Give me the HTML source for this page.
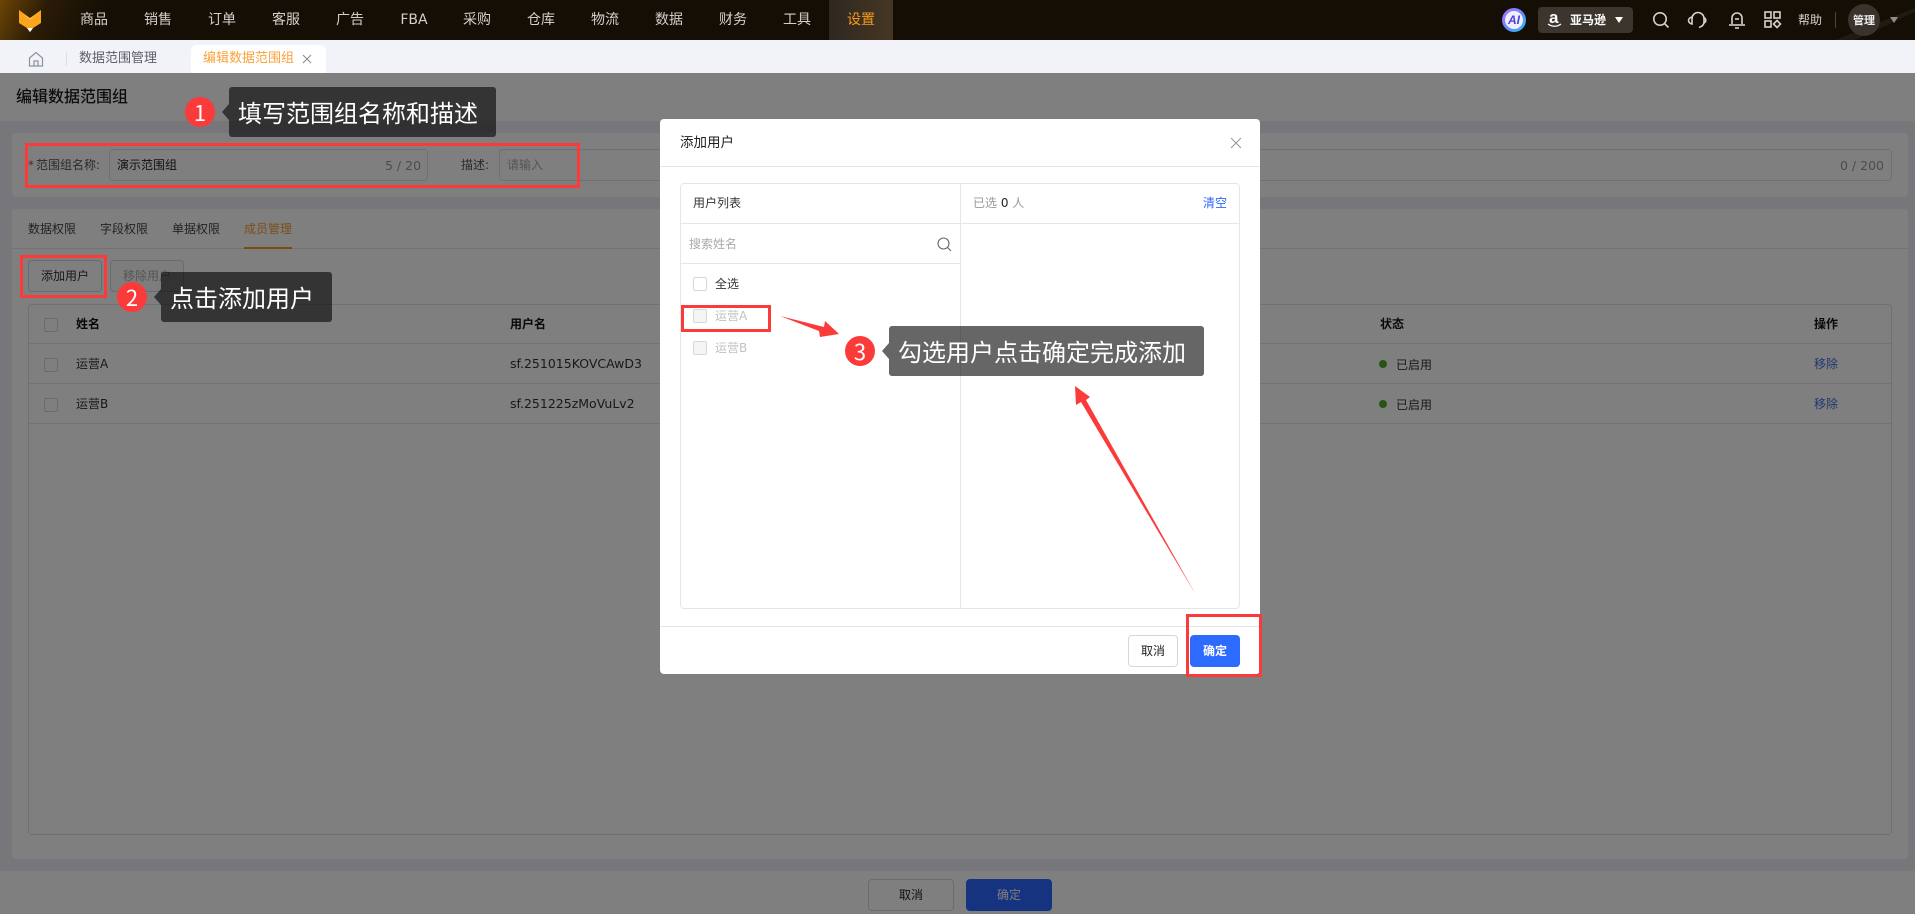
<!DOCTYPE html>
<html lang="zh"><head><meta charset="utf-8"><title>编辑数据范围组</title>
<style>
*{box-sizing:border-box;margin:0;padding:0}
html,body{width:1915px;height:914px;overflow:hidden;background:#eeeef6}
body{position:relative;font:12px/1 "DejaVu Sans","Noto Sans CJK SC",sans-serif;color:#1f1f1f}
.a{position:absolute;white-space:nowrap}
.t{line-height:16px;height:16px}
.header{left:0;top:0;width:1915px;height:40px;background:linear-gradient(115deg,#6b4506 0,#2a1b06 45px,#140e05 100px,#140e05 100%);overflow:hidden}
.nav{top:0;height:40px;line-height:40px;width:64px;text-align:center;font-size:14px;color:#d2d0cc}
.box{background:#fff;border:1px solid #dfe1e6;border-radius:4px}
.cb{width:14px;height:14px;border:1px solid #d4d7de;border-radius:2px;background:#fff}
.btn{text-align:center;border-radius:4px;height:32px;line-height:30px;border:1px solid #d4d7de;background:#fff}
.rl{height:1px;background:#e3e5ea}
.red{border:3px solid #fb3a3a;background:transparent}
.tip{background:rgba(5,5,5,.61);border-radius:3px;height:50px;color:#fff;font:24px/50px "Noto Sans CJK SC",sans-serif;padding-left:9px}
.tip:before{content:"";position:absolute;left:-7px;top:17px;border:8px solid transparent;border-left:0;border-right:7px solid rgba(5,5,5,.61)}
.n{width:30px;height:30px;border-radius:50%;background:#fb3a3a;color:#fff;text-align:center;font:22px/30px "Noto Sans CJK SC",sans-serif}
</style></head><body>

<!-- page below overlay -->
<div class="a" style="left:0;top:73px;width:1915px;height:48px;background:#fff"></div>
<div class="a t" style="left:16px;top:89px;font-size:16px;font-weight:500;color:#1b1b1b">编辑数据范围组</div>

<div class="a" style="left:12px;top:133px;width:1896px;height:64px;background:#fff;border-radius:4px"></div>
<div class="a t" style="left:28px;top:157px;color:#e33">*</div>
<div class="a t" style="left:36px;top:157px;color:#555">范围组名称:</div>
<div class="a box" style="left:109px;top:149px;width:319px;height:32px"></div>
<div class="a t" style="left:117px;top:157px;color:#222">演示范围组</div>
<div class="a t" style="left:385px;top:158px;color:#999;font-size:12.5px">5 / 20</div>
<div class="a t" style="left:461px;top:157px;color:#555">描述:</div>
<div class="a box" style="left:499px;top:149px;width:1393px;height:32px"></div>
<div class="a t" style="left:507px;top:157px;color:#aaa">请输入</div>
<div class="a t" style="left:1840px;top:158px;color:#999;font-size:12.5px">0 / 200</div>

<div class="a" style="left:12px;top:209px;width:1896px;height:650px;background:#fff;border-radius:4px"></div>
<div class="a t" style="left:28px;top:221px;color:#444">数据权限</div>
<div class="a t" style="left:100px;top:221px;color:#444">字段权限</div>
<div class="a t" style="left:172px;top:221px;color:#444">单据权限</div>
<div class="a t" style="left:244px;top:221px;color:#f39c32">成员管理</div>
<div class="a" style="left:12px;top:248px;width:1896px;height:1px;background:#e3e5ea"></div>
<div class="a" style="left:244px;top:247px;width:48px;height:2px;background:#f39c12"></div>
<div class="a btn" style="left:28px;top:260px;width:74px;color:#333">添加用户</div>
<div class="a btn" style="left:110px;top:260px;width:74px;color:#aaa;background:#fafafa">移除用户</div>

<div class="a box" style="left:28px;top:304px;width:1864px;height:531px"></div>
<div class="a rl" style="left:29px;top:343px;width:1862px"></div>
<div class="a rl" style="left:29px;top:383px;width:1862px"></div>
<div class="a rl" style="left:29px;top:423px;width:1862px"></div>
<div class="a cb" style="left:44px;top:318px"></div>
<div class="a cb" style="left:44px;top:358px"></div>
<div class="a cb" style="left:44px;top:398px"></div>
<div class="a t" style="left:76px;top:316px;font-weight:700;color:#111">姓名</div>
<div class="a t" style="left:510px;top:316px;font-weight:700;color:#111">用户名</div>
<div class="a t" style="left:1380px;top:316px;font-weight:700;color:#111">状态</div>
<div class="a t" style="left:1814px;top:316px;font-weight:700;color:#111">操作</div>
<div class="a t" style="left:76px;top:356px;color:#333">运营A</div>
<div class="a t" style="left:510px;top:356px;color:#333;font-size:12.5px">sf.251015KOVCAwD3</div>
<div class="a t" style="left:76px;top:396px;color:#333">运营B</div>
<div class="a t" style="left:510px;top:396px;color:#333;font-size:12.5px">sf.251225zMoVuLv2</div>
<div class="a" style="left:1379px;top:360px;width:8px;height:8px;border-radius:50%;background:#52a82e"></div>
<div class="a t" style="left:1396px;top:357px;color:#333">已启用</div>
<div class="a" style="left:1379px;top:400px;width:8px;height:8px;border-radius:50%;background:#52a82e"></div>
<div class="a t" style="left:1396px;top:397px;color:#333">已启用</div>
<div class="a t" style="left:1814px;top:356px;color:#3f6fe0">移除</div>
<div class="a t" style="left:1814px;top:396px;color:#3f6fe0">移除</div>

<div class="a" style="left:0;top:871px;width:1915px;height:43px;background:#fff"></div>
<div class="a btn" style="left:868px;top:879px;width:86px;color:#222">取消</div>
<div class="a btn" style="left:966px;top:879px;width:86px;background:#2d66ff;border-color:#2d66ff;color:#fff">确定</div>

<!-- overlay -->
<div class="a" style="left:0;top:73px;width:1915px;height:841px;background:rgba(0,0,0,.5)"></div>

<!-- top header -->
<div class="a header">
  <svg class="a" style="right:0;top:0" width="120" height="40" viewBox="0 0 120 40"><path d="M40 40L120 8V12L60 40Z" fill="#2a2620" opacity=".5"/></svg>
  <svg class="a" style="left:0;top:0" width="50" height="40" viewBox="0 0 50 40">
    <path d="M19 10L30 18 41 10V23L33 28 30 32 27 28 19 23Z" fill="#fba51c"/>
    <path d="M27 28H33L30 32Z" fill="#fff"/>
    <path d="M24 15L30 20 36 15 30 18Z" fill="#fdc04a"/>
  </svg>
  <div class="a nav" style="left:62px">商品</div>
  <div class="a nav" style="left:126px">销售</div>
  <div class="a nav" style="left:190px">订单</div>
  <div class="a nav" style="left:254px">客服</div>
  <div class="a nav" style="left:318px">广告</div>
  <div class="a nav" style="left:382px">FBA</div>
  <div class="a nav" style="left:445px">采购</div>
  <div class="a nav" style="left:509px">仓库</div>
  <div class="a nav" style="left:573px">物流</div>
  <div class="a nav" style="left:637px">数据</div>
  <div class="a nav" style="left:701px">财务</div>
  <div class="a nav" style="left:765px">工具</div>
  <div class="a nav" style="left:829px;background:linear-gradient(90deg,#2e2820,#463624);color:#f79a1e">设置</div>

  <div class="a" style="left:1502px;top:8px;width:24px;height:24px;border-radius:50%;background:linear-gradient(135deg,#b36bff,#5d8cff 55%,#29c7f7);"></div>
  <div class="a" style="left:1505px;top:11px;width:18px;height:18px;border-radius:50%;background:#f2eefc;color:#4b3fd8;font:italic 700 12px/18px 'Liberation Sans',sans-serif;text-align:center">AI</div>

  <div class="a" style="left:1538px;top:7px;width:95px;height:26px;background:#3b352d;border-radius:4px"></div>
  <div class="a" style="left:1549px;top:8px;color:#fff;font:700 17px/20px 'Liberation Sans',sans-serif">a</div>
  <svg class="a" style="left:1547px;top:23px" width="16" height="6" viewBox="0 0 16 6"><path d="M1 1C5 4 10 4 14 1" fill="none" stroke="#fff" stroke-width="1.3"/></svg>
  <div class="a" style="left:1570px;top:12px;line-height:16px;color:#fff;font-weight:700">亚马逊</div>
  <svg class="a" style="left:1615px;top:17px" width="8" height="7" viewBox="0 0 8 7"><path d="M0 0H8L4 6Z" fill="#fff"/></svg>

  <svg class="a" style="left:1652px;top:11px" width="18" height="18" viewBox="0 0 18 18" fill="none" stroke="#d5d3cf" stroke-width="1.6"><circle cx="8" cy="8" r="6.2"/><path d="M12.5 12.5L16.5 16.5"/></svg>
  <svg class="a" style="left:1687px;top:11px" width="20" height="18" viewBox="0 0 20 18" fill="none" stroke="#d5d3cf" stroke-width="1.6"><path d="M5 7.500A6 6 0 0 1 17 7.500V11C17 14 15 15.500 12 16.500"/><path d="M5 6C3 6.500 1.500 8 1.500 9.500S3 12.500 5 13Z"/><path d="M17 6.500C18.300 7.300 18.800 8.300 18.800 9.300S18.300 11.300 17 12"/></svg>
  <svg class="a" style="left:1728px;top:11px" width="18" height="18" viewBox="0 0 18 18" fill="none" stroke="#d5d3cf" stroke-width="1.6"><path d="M4 13V7A5 5 0 0 1 14 7V13"/><path d="M1 14H17"/><path d="M7 17H11"/><path d="M7 8H11"/></svg>
  <svg class="a" style="left:1764px;top:11px" width="18" height="18" viewBox="0 0 18 18" fill="none" stroke="#d5d3cf" stroke-width="1.6"><rect x="1" y="1" width="6" height="6"/><rect x="10" y="1" width="6" height="6"/><rect x="1" y="10" width="6" height="6"/><path d="M13 9.500L16.500 13 13 16.500 9.500 13Z"/></svg>
  <div class="a" style="left:1798px;top:12px;line-height:16px;color:#d5d3cf">帮助</div>
  <div class="a" style="left:1835px;top:12px;width:1px;height:16px;background:#4a4640"></div>
  <div class="a" style="left:1848px;top:4px;width:32px;height:32px;border-radius:50%;background:#38332c;color:#eee;font-size:11px;line-height:33px;text-align:center;font-weight:700">管理</div>
  <svg class="a" style="left:1890px;top:17px" width="8" height="7" viewBox="0 0 8 7"><path d="M0 0H8L4 6Z" fill="#8f8d88"/></svg>
</div>

<!-- tab bar -->
<div class="a" style="left:0;top:40px;width:1915px;height:33px;background:#f1f3f8"></div>
<svg class="a" style="left:28px;top:51px" width="16" height="16" viewBox="0 0 16 16" fill="none" stroke="#8c929c" stroke-width="1.2"><path d="M1.500 7L8 1.500 14.500 7V15H1.500Z"/><path d="M6 15V10H10V15"/></svg>
<div class="a" style="left:66px;top:52px;width:1px;height:14px;background:#dcdfe5"></div>
<div class="a t" style="left:79px;top:51px;font-size:13px;color:#5c5f66">数据范围管理</div>
<div class="a" style="left:191px;top:45px;width:135px;height:28px;background:#fff;border-radius:5px 5px 0 0"></div>
<div class="a t" style="left:203px;top:51px;font-size:13px;color:#f9a23b">编辑数据范围组</div>
<svg class="a" style="left:302px;top:54px" width="10" height="10" viewBox="0 0 10 10" stroke="#888" stroke-width="1"><path d="M1 1L9 9M9 1L1 9"/></svg>

<!-- modal -->
<div class="a" style="left:660px;top:119px;width:600px;height:555px;background:#fff;border-radius:4px"></div>
<div class="a t" style="left:680px;top:135px;font-size:13.5px;color:#222">添加用户</div>
<svg class="a" style="left:1230px;top:137px" width="12" height="12" viewBox="0 0 12 12" stroke="#999" stroke-width="1.1"><path d="M1 1L11 11M11 1L1 11"/></svg>
<div class="a rl" style="left:660px;top:166px;width:600px"></div>
<div class="a" style="left:680px;top:183px;width:560px;height:426px;border:1px solid #e3e6ec;border-radius:4px"></div>
<div class="a" style="left:960px;top:183px;width:1px;height:426px;background:#e3e6ec"></div>
<div class="a" style="left:681px;top:223px;width:558px;height:1px;background:#e3e6ec"></div>
<div class="a" style="left:681px;top:263px;width:279px;height:1px;background:#e3e6ec"></div>
<div class="a t" style="left:693px;top:195px;color:#333">用户列表</div>
<div class="a t" style="left:973px;top:195px;color:#999">已选 <span style="color:#222">0</span> 人</div>
<div class="a t" style="left:1203px;top:195px;color:#2d66ff">清空</div>
<div class="a t" style="left:689px;top:236px;color:#aaa">搜索姓名</div>
<svg class="a" style="left:937px;top:237px" width="15" height="15" viewBox="0 0 15 15" fill="none" stroke="#666" stroke-width="1.1"><circle cx="6.500" cy="6.500" r="5.500"/><path d="M10.500 10.500L14 14"/></svg>
<div class="a cb" style="left:693px;top:277px"></div>
<div class="a t" style="left:715px;top:276px;color:#333">全选</div>
<div class="a cb" style="left:693px;top:309px;background:#f5f5f5"></div>
<div class="a t" style="left:715px;top:308px;color:#c2c2c2">运营A</div>
<div class="a cb" style="left:693px;top:341px;background:#f5f5f5"></div>
<div class="a t" style="left:715px;top:340px;color:#c2c2c2">运营B</div>
<div class="a rl" style="left:660px;top:626px;width:600px"></div>
<div class="a btn" style="left:1128px;top:635px;width:50px;color:#222">取消</div>
<div class="a btn" style="left:1190px;top:635px;width:50px;background:#2d6bff;border-color:#2d6bff;color:#fff;font-weight:700">确定</div>

<!-- annotations -->
<div class="a red" style="left:25px;top:143px;width:555px;height:45px"></div>
<div class="a red" style="left:20px;top:255px;width:87px;height:43px"></div>
<div class="a red" style="left:681px;top:305px;width:90px;height:27px"></div>
<div class="a red" style="left:1186px;top:614px;width:76px;height:63px"></div>

<div class="a n" style="left:185px;top:97px">1</div>
<div class="a tip" style="left:229px;top:87px;width:267px">填写范围组名称和描述</div>
<div class="a n" style="left:117px;top:282px">2</div>
<div class="a tip" style="left:161px;top:272px;width:171px">点击添加用户</div>
<div class="a n" style="left:845px;top:336px">3</div>
<div class="a tip" style="left:889px;top:326px;width:315px">勾选用户点击确定完成添加</div>

<svg class="a" style="left:0;top:0" width="1915" height="914" viewBox="0 0 1915 914">
  <path d="M780 316L824 327 825 321 839 334 820 337 819 331Z" fill="#fb3a3a"/>
  <path d="M1075 386L1090 397 1086 400 1196 595 1081 402 1076 405Z" fill="#fb3a3a"/>
</svg>
</body></html>
